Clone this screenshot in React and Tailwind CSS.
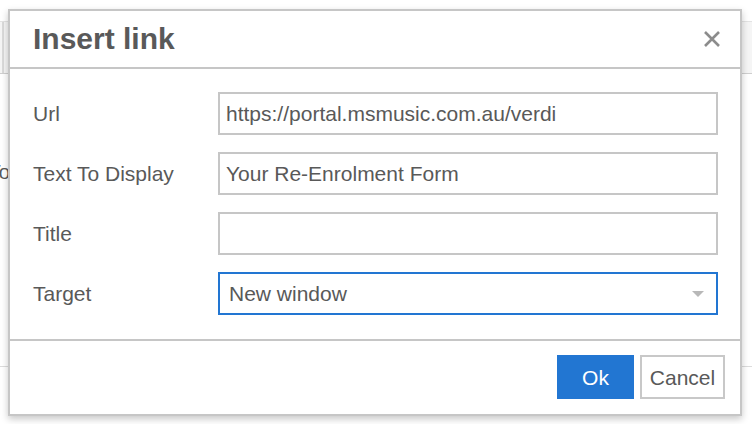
export default function App() {
  const rows = [
    { label: "Url", value: "https://portal.msmusic.com.au/verdi" },
    { label: "Text To Display", value: "Your Re-Enrolment Form" },
    { label: "Title", value: "" },
  ];
  return (
    <div className="relative w-[752px] h-[424px] bg-white overflow-hidden font-['Liberation_Sans',Arial,sans-serif] text-[#595959]">
      {/* page behind the dialog */}
      <div className="pt-[21px]">
        <div className="h-[53px] border-t border-[#e3e3e3] border-b border-b-[#cfcfcf] bg-[#f5f5f5] pl-[2px]">
          <div className="h-full w-[2px] bg-[#dadada]" />
        </div>
        <div className="pt-[86px] -ml-[12px] text-[21px] leading-[24px]">To</div>
        <div className="mt-[182px] h-px bg-[#dcdcdc]" />
      </div>

      {/* dialog */}
      <div className="absolute left-[8px] top-[9px] w-[734px] h-[407px] border-2 border-[#c6c6c6] bg-white shadow-[0_3px_7px_rgba(0,0,0,0.22)] flex flex-col">
        <div className="h-[56px] shrink-0 flex items-center justify-between pl-[23px] pr-[19px]">
          <div className="text-[30px] leading-[36px] font-bold text-[#595959]">Insert link</div>
          <svg width="18" height="16" viewBox="0 0 18 16" className="block">
            <path d="M2 1 L16 15 M16 1 L2 15" stroke="#8c8c8c" strokeWidth="2.6" strokeLinecap="butt" fill="none" />
          </svg>
        </div>
        <div className="h-[2px] shrink-0 bg-[#c6c6c6]" />
        <div className="flex-1 flex flex-col gap-[17px] pt-[23px] pl-[23px] pr-[22px]">
          {rows.map((r) => (
            <div key={r.label} className="flex items-center h-[43px]">
              <div className="w-[185px] shrink-0 text-[21px] leading-[24px] pt-[1px]">{r.label}</div>
              <div className="flex-1 h-full border-2 border-[#c6c6c6] flex items-center pl-[6px] pt-[1px] text-[21px] leading-[24px] whitespace-nowrap overflow-hidden">
                {r.value}
              </div>
            </div>
          ))}
          <div className="flex items-center h-[43px]">
            <div className="w-[185px] shrink-0 text-[21px] leading-[24px] pt-[1px]">Target</div>
            <div className="flex-1 h-full border-2 border-[#2276d2] flex items-center justify-between pl-[9px] pr-[12px] pt-[1px] text-[21px] leading-[24px]">
              <span>New window</span>
              <svg width="12" height="6" viewBox="0 0 12 6" className="block">
                <path d="M0 0 L12 0 L6 6 Z" fill="#b8b8b8" />
              </svg>
            </div>
          </div>
        </div>
        <div className="h-[2px] shrink-0 bg-[#c6c6c6]" />
        <div className="h-[73px] shrink-0 flex justify-end items-start gap-[6px] pt-[14px] pr-[15px]">
          <div className="w-[77px] h-[44px] bg-[#2276d2] text-white text-[21px] leading-[24px] pt-[1px] flex items-center justify-center">
            Ok
          </div>
          <div className="w-[85px] h-[44px] border-2 border-[#c8c8c8] bg-white text-[#595959] text-[21px] leading-[24px] pt-[1px] flex items-center justify-center">
            Cancel
          </div>
        </div>
      </div>
    </div>
  );
}
